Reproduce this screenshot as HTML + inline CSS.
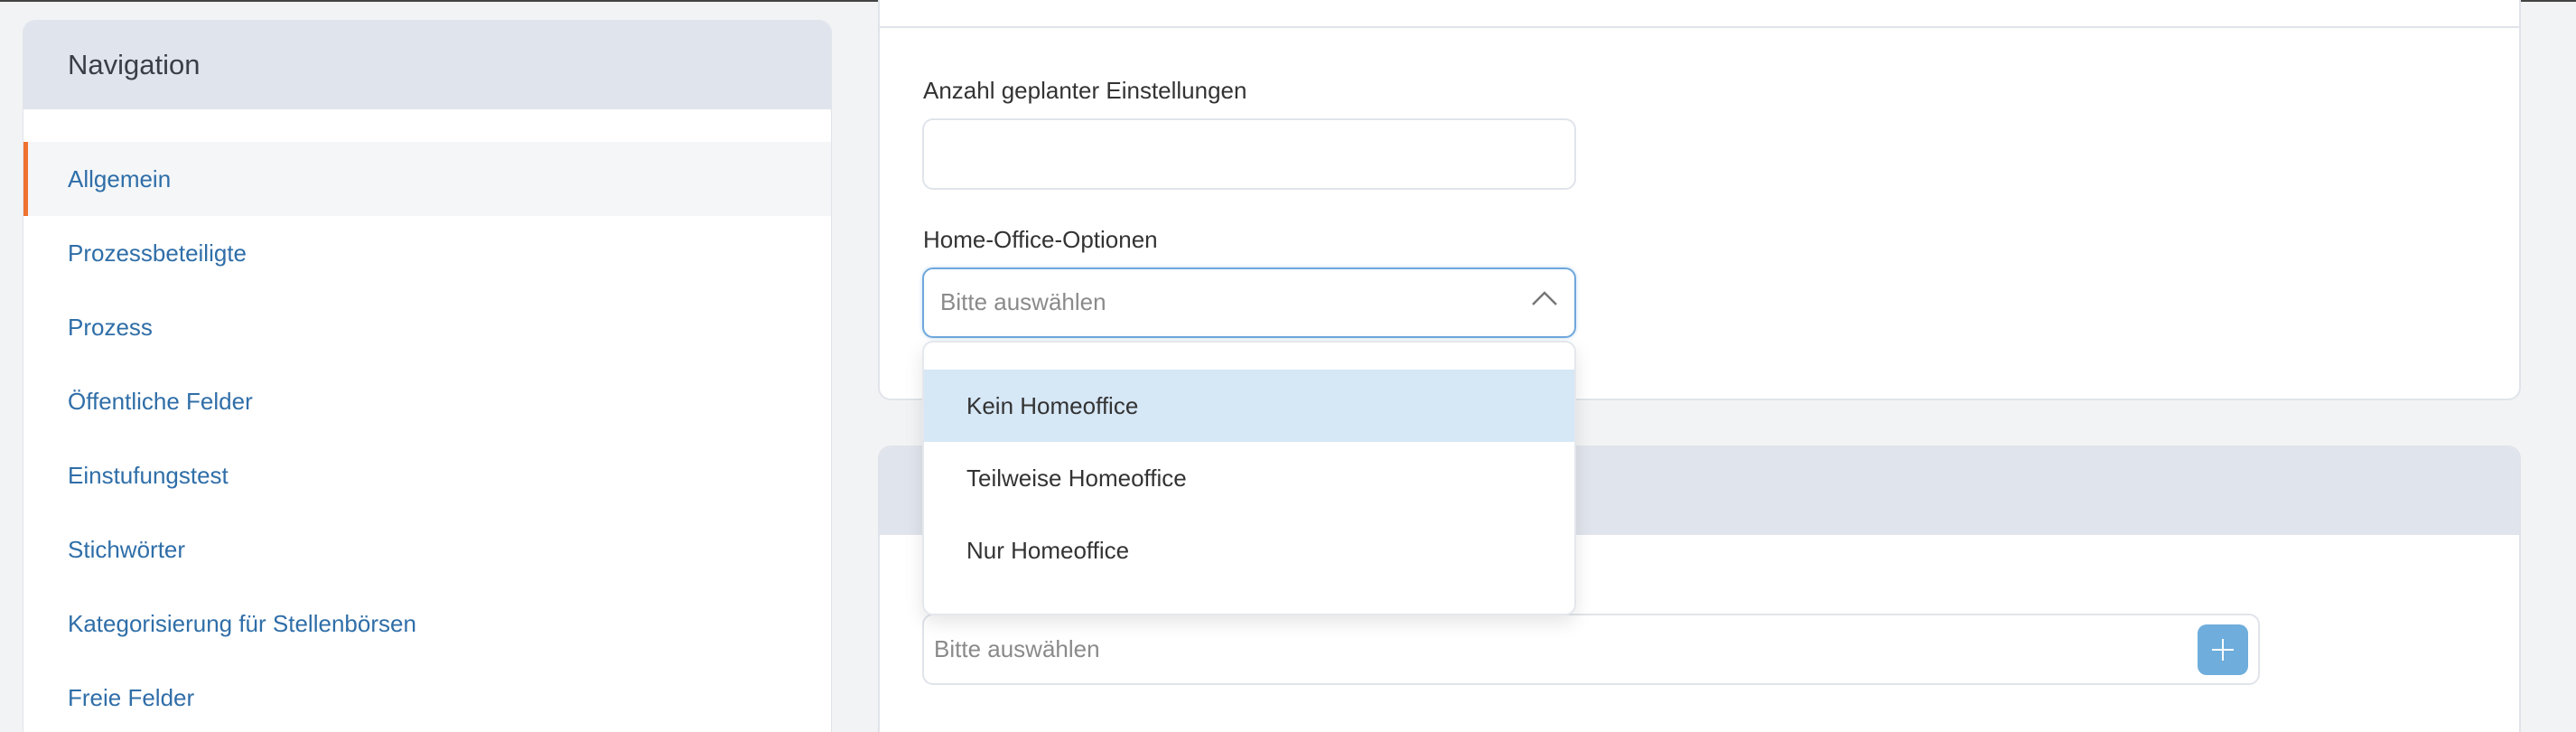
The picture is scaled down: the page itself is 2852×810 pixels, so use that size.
<!DOCTYPE html>
<html><head><meta charset="utf-8"><style>
*{box-sizing:border-box;margin:0;padding:0}
html,body{width:2852px;height:810px;overflow:hidden}
body{background:#f2f3f5;font-family:"Liberation Sans",sans-serif;position:relative}
.topbar{position:absolute;left:0;top:0;width:2852px;height:2px;background:#444}
.abs{position:absolute}
.nav{left:25px;top:22px;width:896px;height:788px;background:#fff;border:1px solid #e0e4ea;border-bottom:none;border-radius:14px 14px 0 0;overflow:hidden}
.navh{position:absolute;left:0;top:0;width:100%;height:98px;background:#e0e4ec;color:#3a3f47;font-size:31px;padding-left:49px;line-height:98px}
.item{position:absolute;left:0;width:100%;height:82px;line-height:82px;padding-left:49px;color:#2f6ea8;font-size:26px}
.active{background:#f4f6f8;border-left:5px solid #ee7230;padding-left:44px}
.card{background:#fff;border:2px solid #e0e4ea;border-radius:14px}
.lbl{font-size:26px;color:#333}
.inp{border:2px solid #e0e4ea;border-radius:12px;background:#fff}
.ph{font-size:26px;color:#8a8a8a}
.opt{position:absolute;left:0;width:100%;height:80px;line-height:80px;padding-left:47px;font-size:26px;color:#333}
</style></head><body>
<div class="topbar"></div>
<div class="abs nav">
 <div class="navh">Navigation</div>
 <div class="item active" style="top:134px">Allgemein</div>
 <div class="item" style="top:216px">Prozessbeteiligte</div>
 <div class="item" style="top:298px">Prozess</div>
 <div class="item" style="top:380px">Öffentliche Felder</div>
 <div class="item" style="top:462px">Einstufungstest</div>
 <div class="item" style="top:544px">Stichwörter</div>
 <div class="item" style="top:626px">Kategorisierung für Stellenbörsen</div>
 <div class="item" style="top:708px">Freie Felder</div>
</div>
<div class="abs card" style="left:972px;top:0px;width:1819px;height:443px;border-top:none;border-radius:0 0 14px 14px"></div>
<div class="abs" style="left:974px;top:29px;width:1815px;height:2px;background:#e0e4ea"></div>
<div class="abs lbl" style="left:1022px;top:85px">Anzahl geplanter Einstellungen</div>
<div class="abs inp" style="left:1021px;top:131px;width:724px;height:79px"></div>
<div class="abs lbl" style="left:1022px;top:250px">Home-Office-Optionen</div>
<div class="abs inp" style="left:1021px;top:296px;width:724px;height:78px;border-color:#6fa8dc;box-shadow:0 0 4px rgba(111,168,220,.4)"></div>
<div class="abs ph" style="left:1041px;top:319px">Bitte auswählen</div>
<svg class="abs" style="left:1695px;top:320px" width="30" height="20"><path d="M2 17 L15 4 L28 17" fill="none" stroke="#777" stroke-width="2.5"/></svg>

<div class="abs card" style="left:972px;top:493px;width:1819px;height:317px;overflow:hidden;border-bottom:none;border-radius:14px 14px 0 0">
 <div style="height:97px;background:#e0e4ec"></div>
</div>
<div class="abs inp" style="left:1021px;top:679px;width:1481px;height:79px"></div>
<div class="abs ph" style="left:1034px;top:703px">Bitte auswählen</div>
<div class="abs" style="left:2433px;top:691px;width:56px;height:56px;background:#6eaddc;border-radius:10px"></div>
<svg class="abs" style="left:2433px;top:691px" width="56" height="56"><path d="M28 16V40M16 28H40" stroke="#fff" stroke-width="2"/></svg>

<div class="abs" style="left:1021px;top:377px;width:724px;height:304px;background:#fff;border:2px solid #e4e7ec;border-radius:12px;box-shadow:0 8px 20px rgba(0,0,0,.1);overflow:hidden">
 <div class="opt" style="top:30px;background:#d6e7f6">Kein Homeoffice</div>
 <div class="opt" style="top:110px">Teilweise Homeoffice</div>
 <div class="opt" style="top:190px">Nur Homeoffice</div>
</div>
</body></html>
